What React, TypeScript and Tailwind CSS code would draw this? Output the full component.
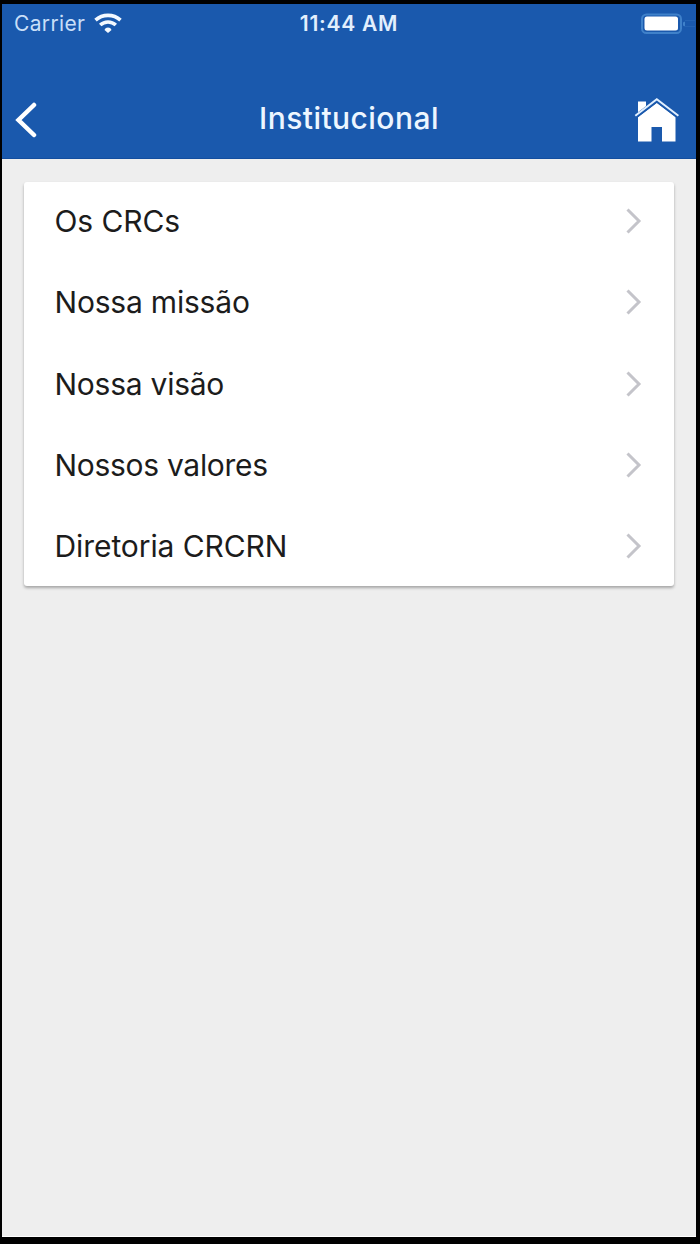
interface MenuItem {
  label: string;
  tracking: string;
}

const items: MenuItem[] = [
  { label: 'Os CRCs', tracking: 'tracking-[-0.1px]' },
  { label: 'Nossa missão', tracking: 'tracking-[-0.2px]' },
  { label: 'Nossa visão', tracking: 'tracking-[-0.25px]' },
  { label: 'Nossos valores', tracking: 'tracking-[-0.3px]' },
  { label: 'Diretoria CRCRN', tracking: 'tracking-[-0.08px]' }
];

function WifiIcon() {
  return (
    <svg className="ml-[9px] h-[21px] w-[28px]" viewBox="0 0 28 21" fill="none" stroke="#f4f9ff">
      <path d="M1.5 7.2C8.5 0.8 19.5 0.8 26.5 7.2" strokeWidth="3.6" />
      <path d="M6.2 12C10.7 7.9 17.3 7.9 21.8 12" strokeWidth="3.6" />
      <path d="M14 20L10.5 17C11.5 13.700 16.500 13.700 17.500 17Z" fill="#f4f9ff" stroke="none" />
    </svg>
  );
}

function BatteryIcon() {
  return (
    <svg className="h-[22px] w-[56px]" viewBox="0 0 56 22" fill="none">
      <rect x="2" y="1.5" width="39" height="18.5" rx="4.5" stroke="#3f81ca" strokeWidth="2" />
      <rect x="4.5" y="3.5" width="33.5" height="14" rx="2.5" fill="#fff" />
      <path d="M43 9.500L45 8.500V13.500L43 12.500Z" fill="#3f81ca" />
      <path d="M45 7.500H55M45 13.500H55" stroke="#2463b4" strokeWidth="1" />
    </svg>
  );
}

function HomeIcon() {
  return (
    <svg className="h-[46px] w-[46px]" viewBox="0 0 46 46" fill="none">
      <path d="M4 5.500H12V12L4 18Z" fill="#fff" />
      <path d="M4 21L22.800 6.800L41.500 21V45.500H28V31H17.500V45.500H4Z" fill="#fff" />
      <path d="M1.500 20.700L22.800 4.500L44.200 20.700" stroke="#1a59ad" strokeWidth="4" />
      <path d="M1.300 19.800L22.800 3.300L44.400 19.800" stroke="#e2f0ff" strokeWidth="2" />
    </svg>
  );
}

function StatusBar() {
  return (
    <div className="grid h-[39px] grid-cols-3 items-center pl-3">
      <div className="flex items-center">
        <span className="text-[21px] tracking-[0.35px] text-[#c8dff8]">Carrier</span>
        <WifiIcon />
      </div>
      <span className="pr-3 text-center text-[21px] font-semibold tracking-[0.75px] text-[#e2effd]">11:44 AM</span>
      <div className="flex justify-end">
        <BatteryIcon />
      </div>
    </div>
  );
}

function NavBar() {
  return (
    <div className="flex h-[78px] items-center justify-between pr-[16px] pl-[12px]">
      <button className="w-[46px] pt-[2px]" aria-label="Voltar">
        <svg className="h-9 w-6" viewBox="0 0 24 36" fill="none" stroke="#fff" strokeWidth="4.5" strokeLinecap="round">
          <path d="M20 3L4.500 18L20 33" />
        </svg>
      </button>
      <h1 className="pb-px pl-1 text-[30px] font-medium tracking-[0.45px] text-[#edf6ff]">Institucional</h1>
      <button aria-label="Início">
        <HomeIcon />
      </button>
    </div>
  );
}

export default function App() {
  return (
    <div className="h-[1244px] w-[700px] bg-black pt-1 pr-1 pb-[7px] pl-[2px] font-['Inter','Liberation_Sans',sans-serif]">
      <div className="flex h-full flex-col border-b border-white bg-[#eeeeee]">
        <header className="flex h-[155px] shrink-0 flex-col justify-between border-b border-[#134e9f] bg-[#1a59ad]">
          <StatusBar />
          <NavBar />
        </header>

        <main className="px-[22px] pt-[23px]">
          <ul className="flex h-[404px] flex-col justify-center rounded-[3px] bg-white shadow-[0_2px_3px_rgba(0,0,0,0.3)]">
            {items.map(({ label, tracking }) => (
              <li key={label} className="flex h-[81.25px] shrink-0 items-center justify-between pr-[31px] pl-[30.5px]">
                <span className={`text-[30px] text-[#1c1c1c] ${tracking}`}>{label}</span>
                <svg className="mb-px h-7 w-[18px]" viewBox="0 0 18 28" fill="none" stroke="#c4c4ca" strokeWidth="3">
                  <path d="M2.500 2.500L14 14L2.500 25.500" />
                </svg>
              </li>
            ))}
          </ul>
        </main>
      </div>
    </div>
  );
}
